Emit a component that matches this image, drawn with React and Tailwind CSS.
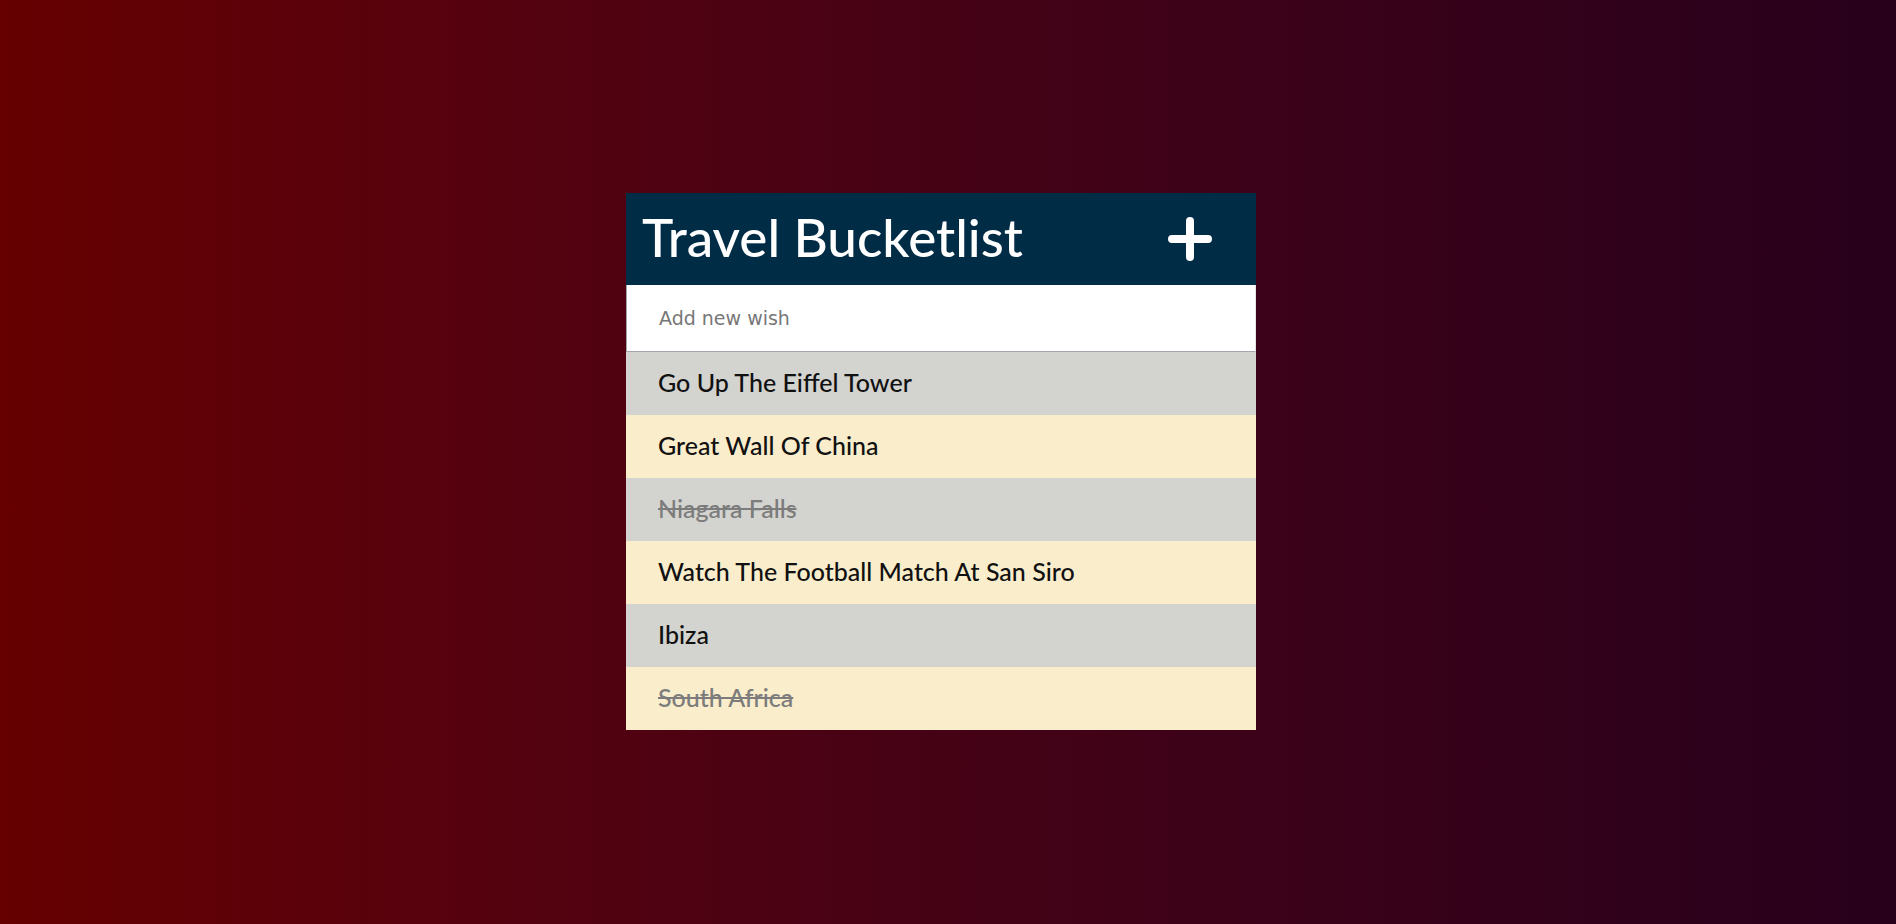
import React, { useState } from 'react'

const initialWishes = [
  { text: 'Go Up The Eiffel Tower', done: false },
  { text: 'Great Wall Of China', done: false },
  { text: 'Niagara Falls', done: true },
  { text: 'Watch The Football Match At San Siro', done: false },
  { text: 'Ibiza', done: false },
  { text: 'South Africa', done: true },
]

const PlusIcon = () => (
  <svg width="44" height="44" viewBox="0 0 44 44" fill="none">
    <path d="M22 4v36M4 22h36" stroke="white" strokeWidth="8" strokeLinecap="round" />
  </svg>
)

export default function App() {
  const [wishes, setWishes] = useState(initialWishes)
  const [draft, setDraft] = useState('')

  const toggle = (i) =>
    setWishes((w) => w.map((item, j) => (j === i ? { ...item, done: !item.done } : item)))

  const addWish = (e) => {
    e.preventDefault()
    if (!draft.trim()) return
    setWishes((w) => [...w, { text: draft.trim(), done: false }])
    setDraft('')
  }

  return (
    <div className="min-h-screen w-full flex items-center justify-center bg-gradient-to-r from-[#660000] to-[#28001c] font-['Lato','Liberation_Sans',sans-serif]">
      <div className="w-[630px] ml-[-14px] -mt-[2px]">
        <div className="h-[92px] bg-[#012c46] flex items-center justify-between pl-4 pr-[44px]">
          <h1 className="text-white text-[53px] font-medium leading-none pb-1">Travel Bucketlist</h1>
          <button type="button" className="flex items-center justify-center">
            <PlusIcon />
          </button>
        </div>
        <form onSubmit={addWish}>
          <input
            value={draft}
            onChange={(e) => setDraft(e.target.value)}
            placeholder="Add new wish"
            className="block w-full h-[67px] bg-white border border-[#a4a4ac] border-t-0 border-r-[#e4e4e4] pl-8 text-[19px] text-[#333] placeholder:text-[#777] outline-none font-['DejaVu_Sans',sans-serif]"
          />
        </form>
        <ul>
          {wishes.map((w, i) => (
            <li
              key={i}
              onClick={() => toggle(i)}
              className={
                'h-[63px] flex items-center pl-8 text-[25px] font-medium cursor-pointer ' +
                (i % 2 === 0 ? 'bg-[#d3d3cf] ' : 'bg-[#faedcb] ') +
                (w.done ? 'line-through text-[#7c7c7c]' : 'text-[#111]')
              }
            >
              {w.text}
            </li>
          ))}
        </ul>
      </div>
    </div>
  )
}
